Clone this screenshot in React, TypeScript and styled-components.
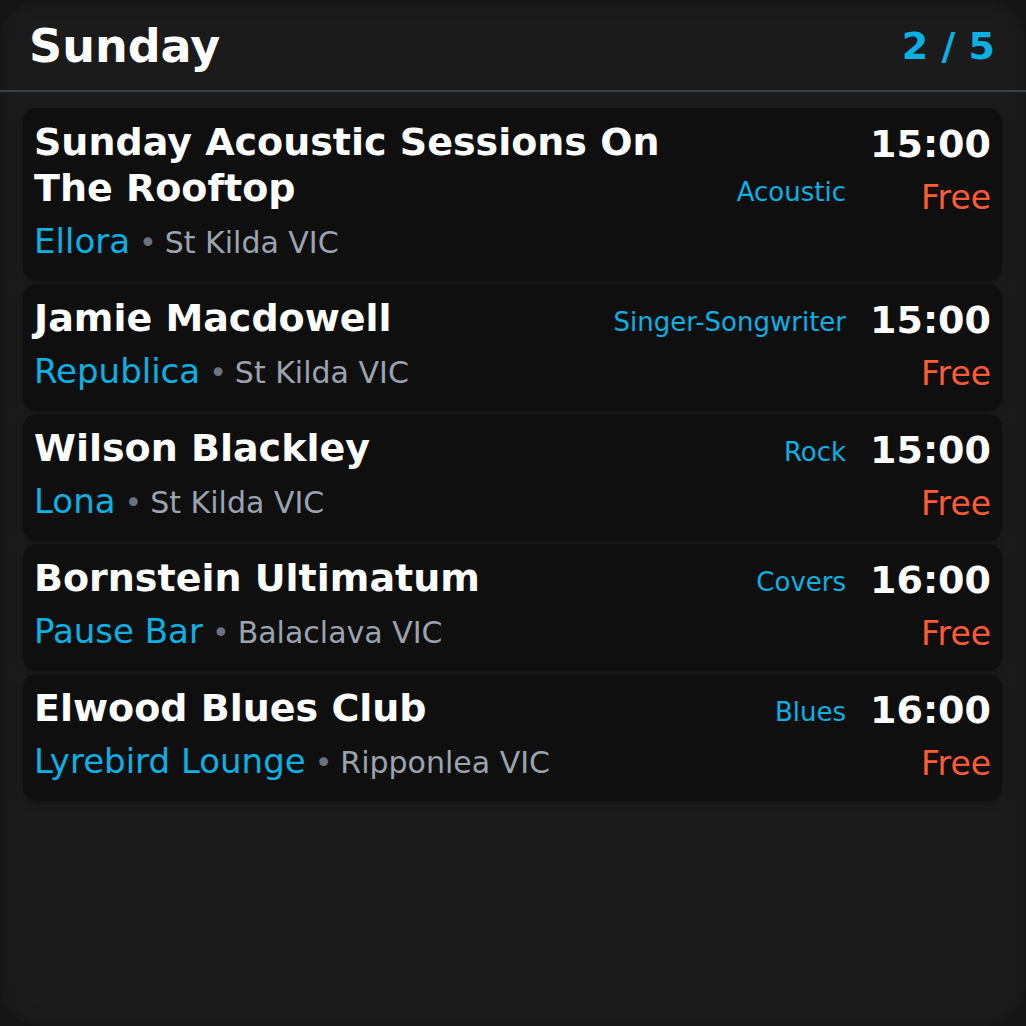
import React from "react";
import styled, { createGlobalStyle } from "styled-components";

const GlobalStyle = createGlobalStyle`
  html, body {
    margin: 0;
    padding: 0;
    background: #151515;
  }
  body {
    font-family: "DejaVu Sans", "Liberation Sans", sans-serif;
    -webkit-font-smoothing: antialiased;
  }
  * { box-sizing: border-box; }
`;

const Screen = styled.div`
  width: 1026px;
  height: 1026px;
  background: #1b1b1b;
  border-radius: 40px;
  overflow: hidden;
  display: flex;
  flex-direction: column;
  box-shadow: inset 0 0 18px rgba(0, 0, 0, 0.25);
`;

const Header = styled.header`
  display: flex;
  align-items: center;
  justify-content: space-between;
  padding: 19px 31px 17px 29px;
  border-bottom: 2px solid #3a3f4a;
`;

const DayTitle = styled.h1`
  margin: 0;
  font-size: 46px;
  font-weight: 700;
  color: #ffffff;
  line-height: normal;
`;

const Pager = styled.div`
  font-size: 38px;
  font-weight: 700;
  color: #0cb0e2;
`;

const List = styled.div`
  display: flex;
  flex-direction: column;
  gap: 3px;
  padding: 16px 24px 0 23px;
`;

const Card = styled.div`
  display: flex;
  align-items: flex-start;
  gap: 24px;
  padding: 11px 11px 16px 11px;
  background: #0f0f0f;
  border-radius: 14px;
  box-shadow: 0 3px 10px rgba(0, 0, 0, 0.22);
`;

const Main = styled.div`
  flex: 1;
  min-width: 0;
  display: flex;
  flex-direction: column;
`;

const TitleRow = styled.div`
  display: flex;
  align-items: last baseline;
  gap: 16px;
`;

const EventTitle = styled.div`
  flex: 1;
  min-width: 0;
  font-size: 38px;
  font-weight: 700;
  line-height: 46px;
  color: #ffffff;
`;

const Genre = styled.div`
  font-size: 26px;
  color: #0cb0e2;
  white-space: nowrap;
`;

const VenueLine = styled.div`
  margin-top: 8px;
  font-size: 34px;
  line-height: 44px;
  white-space: nowrap;
`;

const Venue = styled.span`
  font-size: 34px;
  color: #0cb0e2;
`;

const Dot = styled.span`
  font-size: 30px;
  color: #6b7280;
  margin: 0 8px 0 9px;
`;

const Location = styled.span`
  font-size: 30px;
  color: #9ca3af;
`;

const Side = styled.div`
  display: flex;
  flex-direction: column;
  align-items: flex-end;
  margin-top: 2px;
`;

const Time = styled.div`
  font-size: 38px;
  font-weight: 700;
  line-height: 46px;
  color: #ffffff;
`;

const Price = styled.div`
  margin-top: 11px;
  font-size: 33px;
  line-height: 40px;
  color: #ff5a36;
`;

type Gig = {
  title: string;
  genre: string;
  venue: string;
  suburb: string;
  time: string;
  price: string;
};

const gigs: Gig[] = [
  {
    title: "Sunday Acoustic Sessions On The Rooftop",
    genre: "Acoustic",
    venue: "Ellora",
    suburb: "St Kilda VIC",
    time: "15:00",
    price: "Free",
  },
  {
    title: "Jamie Macdowell",
    genre: "Singer-Songwriter",
    venue: "Republica",
    suburb: "St Kilda VIC",
    time: "15:00",
    price: "Free",
  },
  {
    title: "Wilson Blackley",
    genre: "Rock",
    venue: "Lona",
    suburb: "St Kilda VIC",
    time: "15:00",
    price: "Free",
  },
  {
    title: "Bornstein Ultimatum",
    genre: "Covers",
    venue: "Pause Bar",
    suburb: "Balaclava VIC",
    time: "16:00",
    price: "Free",
  },
  {
    title: "Elwood Blues Club",
    genre: "Blues",
    venue: "Lyrebird Lounge",
    suburb: "Ripponlea VIC",
    time: "16:00",
    price: "Free",
  },
];

export default function App() {
  return (
    <>
      <GlobalStyle />
      <Screen>
        <Header>
          <DayTitle>Sunday</DayTitle>
          <Pager>2 / 5</Pager>
        </Header>
        <List>
          {gigs.map((g) => (
            <Card key={g.title}>
              <Main>
                <TitleRow>
                  <EventTitle>{g.title}</EventTitle>
                  <Genre>{g.genre}</Genre>
                </TitleRow>
                <VenueLine>
                  <Venue>{g.venue}</Venue>
                  <Dot>•</Dot>
                  <Location>{g.suburb}</Location>
                </VenueLine>
              </Main>
              <Side>
                <Time>{g.time}</Time>
                <Price>{g.price}</Price>
              </Side>
            </Card>
          ))}
        </List>
      </Screen>
    </>
  );
}
